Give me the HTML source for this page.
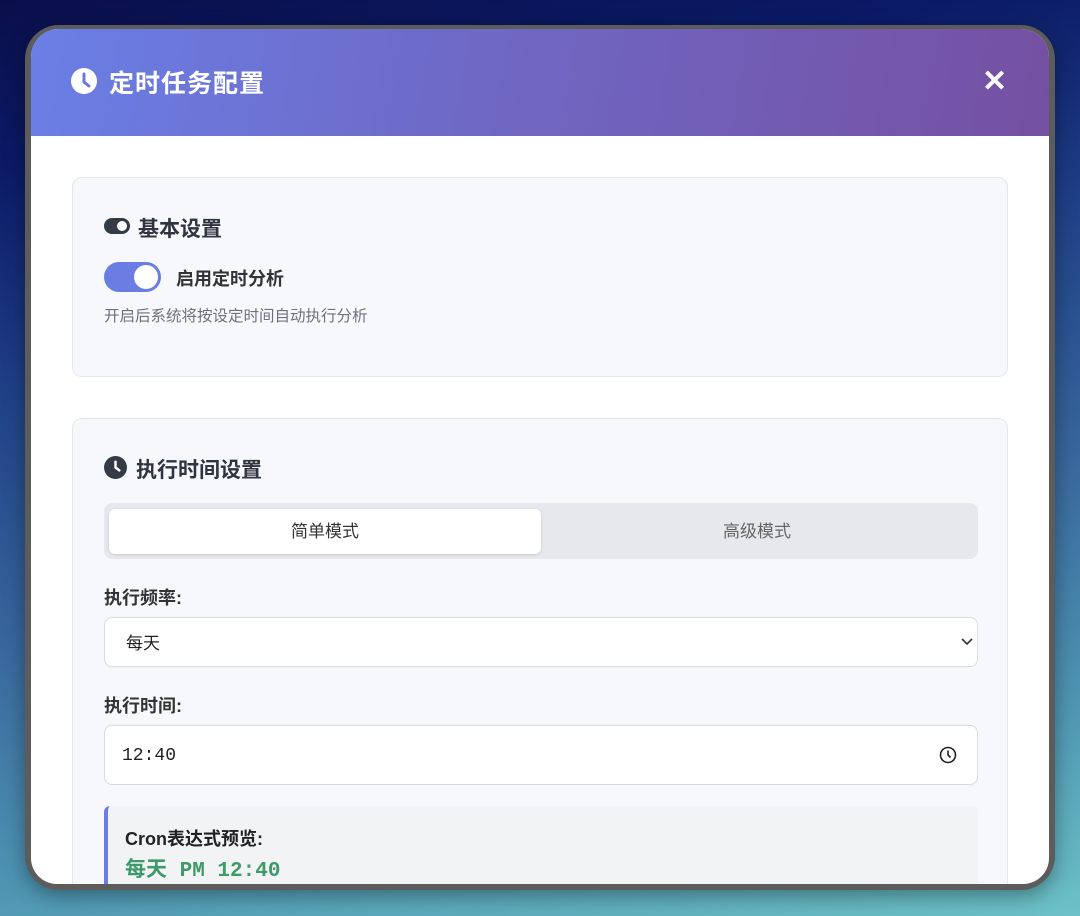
<!DOCTYPE html>
<html><head><meta charset="utf-8"><style>
*{box-sizing:border-box;margin:0;padding:0}
body{width:1080px;height:916px;overflow:hidden;font-family:"Liberation Sans","Noto Sans CJK SC",sans-serif;background:linear-gradient(170deg,#0a0f4a 0%,#0b1a66 15%,#1f3f86 35%,#3a6a9e 60%,#4e94b2 80%,#6cc2c6 100%);position:relative}
.frame{position:absolute;left:25px;top:25px;width:1030px;height:865px;background:#5c5c5c;border-radius:34px;box-shadow:0 6px 20px rgba(0,0,0,.35)}
.win{position:absolute;left:31px;top:29px;width:1018px;height:855px;background:#fff;border-radius:28px 28px 26px 26px;overflow:hidden}
.hdr{height:107px;background:linear-gradient(100deg,#6a7fe6 0%,#6f68c4 45%,#7550a2 100%);position:relative;color:#fff}
.hdr h1{position:absolute;left:78px;top:35px;font-size:25px;font-weight:bold;letter-spacing:1px}
.hdr .ic{position:absolute;left:40px;top:39px}
.close{position:absolute;left:951px;top:35px;font-size:30px;font-weight:bold}
.card{position:absolute;left:41px;width:936px;background:#f7f8fc;border:1px solid #e3e5f0;border-radius:10px}
.t{position:absolute;font-size:21px;font-weight:bold;color:#2e3440}
.seg{position:absolute;left:31px;top:84px;width:874px;height:56px;background:#e7e8ed;border-radius:8px}
.seg .a{position:absolute;left:5px;top:6px;width:432px;height:45px;background:#fff;border-radius:6px;box-shadow:0 1px 3px rgba(0,0,0,.12);text-align:center;line-height:45px;font-size:17px;color:#333}
.seg .b{position:absolute;left:437px;top:6px;width:432px;height:45px;text-align:center;line-height:45px;font-size:17px;color:#666}
.lbl{position:absolute;left:31px;font-size:18px;font-weight:bold;color:#333}
.inp{position:absolute;left:31px;width:874px;background:#fff;border:1px solid #d8dae0;border-radius:8px}
</style></head><body>
<div class="frame"></div>
<div class="win">
 <div class="hdr">
  <svg class="ic" width="26" height="26" viewBox="0 0 26 26"><circle cx="13" cy="13" r="13" fill="#fff"/><path d="M13 6v8l5 4" stroke="#6b7ae0" stroke-width="3" fill="none" stroke-linecap="round"/></svg>
  <h1>定时任务配置</h1>
  <div class="close">✕</div>
 </div>
 <div class="card" style="top:148px;height:200px">
  <svg style="position:absolute;left:31px;top:40px" width="26" height="16" viewBox="0 0 26 16"><rect width="26" height="16" rx="8" fill="#343a46"/><circle cx="18" cy="8" r="5" fill="#fff"/></svg>
  <div class="t" style="left:65px;top:35px">基本设置</div>
  <div style="position:absolute;left:31px;top:84px;width:57px;height:30px;background:#6b7de2;border-radius:15px"><div style="position:absolute;right:3px;top:3px;width:24px;height:24px;border-radius:50%;background:#fff"></div></div>
  <div style="position:absolute;left:103px;top:87px;font-size:18px;font-weight:bold;color:#333">启用定时分析</div>
  <div style="position:absolute;left:31px;top:126px;font-size:15.5px;color:#6c727c">开启后系统将按设定时间自动执行分析</div>
 </div>
 <div class="card" style="top:389px;height:520px">
  <svg style="position:absolute;left:31px;top:37px" width="23" height="23" viewBox="0 0 24 24"><circle cx="12" cy="12" r="12" fill="#343a46"/><path d="M12 6v6l4 3" stroke="#fff" stroke-width="2.6" fill="none" stroke-linecap="round"/></svg>
  <div class="t" style="left:63px;top:35px">执行时间设置</div>
  <div class="seg"><div class="a">简单模式</div><div class="b">高级模式</div></div>
  <div class="lbl" style="top:165px">执行频率:</div>
  <div class="inp" style="top:198px;height:50px"><span style="position:absolute;left:21px;top:11px;font-size:17px;color:#222">每天</span>
   <svg style="position:absolute;right:4px;top:20px" width="12" height="8" viewBox="0 0 12 8"><path d="M1 1l5 5 5-5" stroke="#333" stroke-width="1.6" fill="none"/></svg></div>
  <div class="lbl" style="top:273px">执行时间:</div>
  <div class="inp" style="top:306px;height:60px"><span style="position:absolute;left:17px;top:20px;font-size:18px;font-family:'Liberation Mono',monospace;color:#222">12:40</span>
   <svg style="position:absolute;right:20px;top:20px" width="18" height="18" viewBox="0 0 18 18"><circle cx="9" cy="9" r="7.5" stroke="#222" stroke-width="1.6" fill="none"/><path d="M9 4.5v4.5l2.5 2.5" stroke="#222" stroke-width="1.6" fill="none"/></svg></div>
  <div style="position:absolute;left:31px;top:387px;width:874px;height:120px;background:#f2f3f5;border-left:4px solid #6b7de2;border-radius:6px">
   <div style="position:absolute;left:17px;top:19px;font-size:18px;font-weight:bold;color:#222">Cron表达式预览:</div>
   <div style="position:absolute;left:17px;top:47px;font-size:21px;font-weight:bold;color:#3f9a6a;font-family:'Liberation Mono','Noto Sans CJK SC',monospace">每天 PM 12:40</div>
  </div>
 </div>
</div>
</body></html>
